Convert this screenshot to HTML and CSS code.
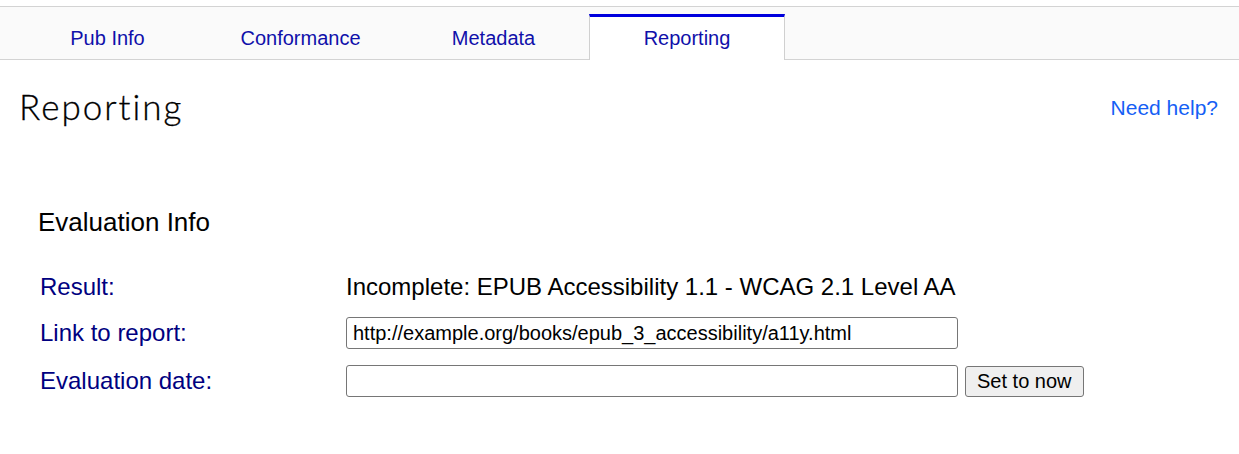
FILE: index.html
```html
<!DOCTYPE html>
<html lang="en">
<head>
<meta charset="utf-8">
<title>Reporting</title>
<link rel="stylesheet" href="styles.css">
</head>
<body>
<nav class="tabbar">
  <ul class="tabs">
    <li class="tab"><a href="#">Pub Info</a></li>
    <li class="tab"><a href="#">Conformance</a></li>
    <li class="tab"><a href="#">Metadata</a></li>
    <li class="tab active"><a href="#">Reporting</a></li>
  </ul>
</nav>
<main class="page">
  <header class="page-head">
    <h1 class="title">Reporting</h1>
    <a class="help" href="#">Need help?</a>
  </header>
  <section class="section">
    <h2 class="section-title">Evaluation Info</h2>
    <div class="grid">
      <div class="label">Result:</div>
      <div class="value">Incomplete: EPUB Accessibility 1.1 - WCAG 2.1 Level AA</div>
      <label class="label" for="link">Link to report:</label>
      <div class="value"><input class="field" id="link" type="text" value="http://example.org/books/epub_3_accessibility/a11y.html"></div>
      <label class="label" for="date">Evaluation date:</label>
      <div class="value row"><input class="field" id="date" type="text" value=""><button class="btn" type="button">Set to now</button></div>
    </div>
  </section>
</main>
</body>
</html>
```
FILE: styles.css
```css
html, body {
  margin: 0;
  padding: 0;
  background: #fff;
  font-family: "Liberation Sans", Arial, sans-serif;
  color: #000;
}

.tabbar {
  margin-top: 6px;
  height: 52px;
  background: #fafafa;
  border-top: 1px solid #d3d3d3;
  border-bottom: 1px solid #d3d3d3;
}

.tabs {
  list-style: none;
  margin: 0;
  padding: 0 0 0 11px;
  display: flex;
  height: 100%;
  align-items: flex-end;
}

.tab {
  width: 193px;
  height: 46px;
  box-sizing: border-box;
  border: 1px solid transparent;
  border-top: 3px solid transparent;
  border-bottom: none;
  display: flex;
  align-items: center;
  justify-content: center;
  margin-bottom: -1px;
}

.tab a {
  color: #1010aa;
  text-decoration: none;
  font-size: 20px;
  line-height: 23px;
}

.tab.active {
  background: #fff;
  border-color: #d0d0d0;
  border-top-color: #0000dd;
  width: 196px;
  margin-left: -1px;
}

.page-head {
  display: flex;
  justify-content: space-between;
  align-items: center;
  padding: 0 21px 0 19px;
}

.title {
  margin: 25px 0 0;
  font-family: Lato, "Liberation Sans", sans-serif;
  font-weight: 300;
  font-size: 35px;
  line-height: 42px;
  letter-spacing: 2px;
  -webkit-text-stroke: 0.3px #000;
}

.help {
  margin-top: 29px;
  color: #1560f5;
  text-decoration: none;
  font-size: 21px;
}

.section {
  padding: 0 0 0 38px;
  margin-top: 80px;
}

.section-title {
  margin: 0;
  font-weight: 400;
  font-size: 26px;
  line-height: 30px;
}

.grid {
  margin-top: 36px;
  display: grid;
  grid-template-columns: 308px auto;
  grid-template-rows: 28px 32px 32px;
  row-gap: 16px;
  align-items: center;
}

.label {
  color: #000080;
  font-size: 24px;
  line-height: 28px;
  padding-left: 2px;
}

.value {
  font-size: 24px;
  line-height: 28px;
}

.row {
  display: flex;
  align-items: center;
  gap: 7px;
}

.field {
  display: block;
  width: 612px;
  height: 32px;
  box-sizing: border-box;
  border: 1px solid #767676;
  border-radius: 3px;
  padding: 0 6px;
  font-family: "Liberation Sans", Arial, sans-serif;
  font-size: 20px;
  color: #000;
}

.btn {
  height: 31px;
  box-sizing: border-box;
  padding: 0 11px;
  font-family: "Liberation Sans", Arial, sans-serif;
  font-size: 20px;
  background: #efefef;
  border: 1px solid #767676;
  border-radius: 3px;
  color: #000;
}
```
